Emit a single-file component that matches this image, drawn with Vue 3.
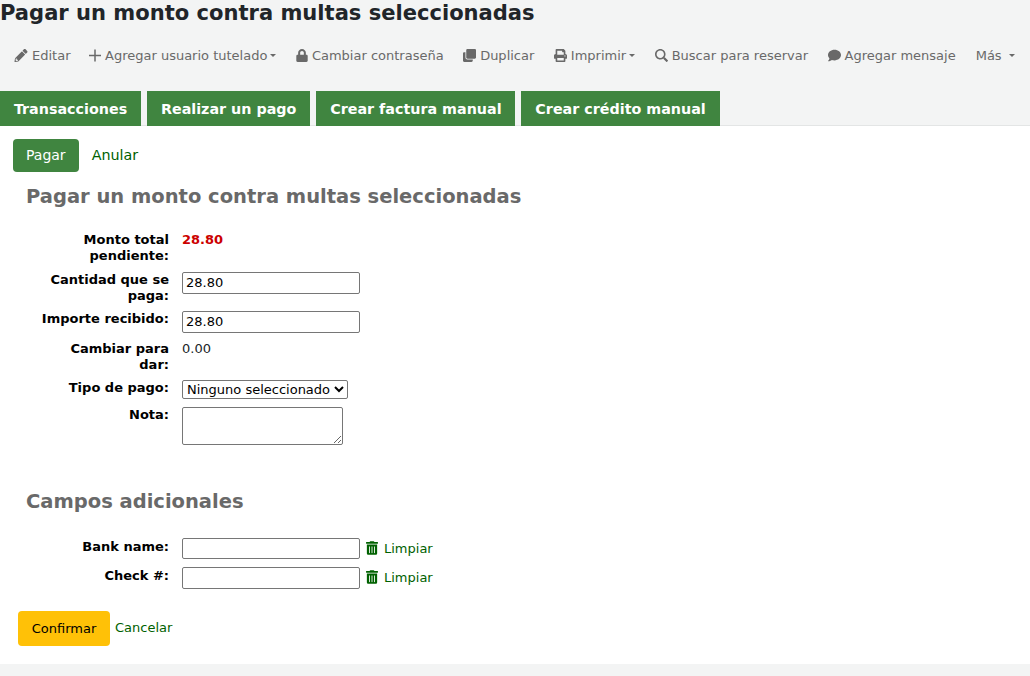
<script setup>
const tools = [
  { icon: 'pencil', label: 'Editar', w: 14 },
  { icon: 'plus', label: 'Agregar usuario tutelado', caret: true, w: 12 },
  { icon: 'lock', label: 'Cambiar contraseña', w: 12 },
  { icon: 'clone', label: 'Duplicar', w: 13 },
  { icon: 'print', label: 'Imprimir', caret: true, w: 13 },
  { icon: 'search', label: 'Buscar para reservar', w: 13 },
  { icon: 'comment', label: 'Agregar mensaje', w: 13 },
  { label: 'Más', caret: true, more: true },
]
const icons = {
  pencil: { box: '0 0 512 512', d: 'M497.9 142.1l-46.1 46.1c-4.7 4.7-12.3 4.7-17 0l-111-111c-4.7-4.7-4.7-12.3 0-17l46.1-46.1c18.7-18.7 49.1-18.7 67.9 0l60.1 60.1c18.8 18.7 18.8 49.1 0 67.9zM284.2 99.8L21.6 362.4.4 483.9c-2.9 16.4 11.4 30.6 27.8 27.8l121.5-21.3 262.6-262.6c4.7-4.7 4.7-12.3 0-17l-111-111c-4.8-4.7-12.4-4.7-17.1 0zM88 424h48v36.3l-64.5 11.3-31.1-31.1L51.7 376H88v48z' },
  plus: { box: '0 0 448 448', d: 'M196 0h56v196h196v56H252v196h-56V252H0v-56h196z' },
  lock: { box: '0 0 448 512', d: 'M400 224h-24v-72C376 68.2 307.8 0 224 0S72 68.2 72 152v72H48c-26.5 0-48 21.5-48 48v192c0 26.5 21.5 48 48 48h352c26.5 0 48-21.5 48-48V272c0-26.500-21.500-48-48-48zm-104 0H152v-72c0-39.700 32.300-72 72-72s72 32.300 72 72v72z' },
  clone: { box: '0 0 512 512', d: 'M464 0c26.510 0 48 21.490 48 48v288c0 26.510-21.490 48-48 48H176c-26.510 0-48-21.490-48-48V48c0-26.510 21.490-48 48-48h288M176 416c-44.112 0-80-35.888-80-80V128H48c-26.510 0-48 21.490-48 48v288c0 26.510 21.490 48 48 48h288c26.510 0 48-21.490 48-48v-48H176z' },
  print: { box: '0 0 512 512', d: 'M448 192V77.250c0-8.490-3.370-16.620-9.370-22.630L393.370 9.370c-6-6-14.140-9.370-22.630-9.370H96C78.330 0 64 14.330 64 32v160c-35.350 0-64 28.650-64 64v112c0 8.840 7.160 16 16 16h48v96c0 17.670 14.330 32 32 32h320c17.670 0 32-14.330 32-32v-96h48c8.840 0 16-7.160 16-16V256c0-35.350-28.650-64-64-64zm-64 256H128v-96h256v96zm0-224H128V64h192v48c0 8.840 7.160 16 16 16h48v96zm48 72c-13.250 0-24-10.750-24-24 0-13.260 10.750-24 24-24s24 10.740 24 24c0 13.250-10.750 24-24 24z' },
  search: { box: '0 0 512 512', d: 'M505 442.7L405.3 343c-4.500-4.500-10.600-7-17-7H372c27.600-35.300 44-79.700 44-128C416 93.100 322.900 0 208 0S0 93.100 0 208s93.100 208 208 208c48.300 0 92.700-16.400 128-44v16.300c0 6.400 2.500 12.500 7 17l99.700 99.700c9.400 9.400 24.600 9.400 33.900 0l28.300-28.300c9.400-9.400 9.400-24.600.1-34zM208 353c-80 0-145-65-145-145 0-80 65-145 145-145 80 0 145 65 145 145 0 80-65 145-145 145z' },
  comment: { box: '0 0 512 512', d: 'M256 32C114.600 32 0 125.100 0 240c0 49.600 21.400 95 57 130.700C44.500 421.100 2.700 466 2.200 466.500c-2.200 2.300-2.800 5.700-1.500 8.700S4.800 480 8 480c66.300 0 116-31.800 140.600-51.400 32.700 12.300 69 19.400 107.400 19.400 141.400 0 256-93.100 256-208S397.400 32 256 32z' },
}
const trash = 'M32 464a48 48 0 0 0 48 48h288a48 48 0 0 0 48-48V128H32zm272-256a16 16 0 0 1 32 0v224a16 16 0 0 1-32 0zm-96 0a16 16 0 0 1 32 0v224a16 16 0 0 1-32 0zm-96 0a16 16 0 0 1 32 0v224a16 16 0 0 1-32 0zM432 32H312l-9.400-18.700A24 24 0 0 0 281.100 0H166.800a23.720 23.720 0 0 0-21.400 13.300L136 32H16A16 16 0 0 0 0 48v32a16 16 0 0 0 16 16h416a16 16 0 0 0 16-16V48a16 16 0 0 0-16-16z'
const tabs = ['Transacciones', 'Realizar un pago', 'Crear factura manual', 'Crear crédito manual']
</script>

<template>
  <div class="page">
    <h1 class="title">Pagar un monto contra multas seleccionadas</h1>
    <div class="toolbar">
      <a v-for="t in tools" :key="t.label" class="tool" :class="{ more: t.more }">
        <svg v-if="t.icon" class="ti" :style="{ width: t.w + 'px' }" :viewBox="icons[t.icon].box"><path :d="icons[t.icon].d" /></svg>
        <span>{{ t.label }}</span>
        <i v-if="t.caret" class="caret"></i>
      </a>
    </div>
    <div class="tabs">
      <a v-for="t in tabs" :key="t" class="tab">{{ t }}</a>
    </div>
    <main class="content">
      <div class="subtabs">
        <a class="pill">Pagar</a>
        <a class="sublink">Anular</a>
      </div>
      <h2 class="h-first">Pagar un monto contra multas seleccionadas</h2>
      <div class="form">
        <div class="row r1">
          <label>Monto total pendiente:</label>
          <span class="due">28.80</span>
        </div>
        <div class="row r2">
          <label>Cantidad que se paga:</label>
          <input class="text" value="28.80" />
        </div>
        <div class="row r3">
          <label>Importe recibido:</label>
          <input class="text" value="28.80" />
        </div>
        <div class="row r4">
          <label>Cambiar para dar:</label>
          <span class="val">0.00</span>
        </div>
        <div class="row r5">
          <label>Tipo de pago:</label>
          <select class="sel"><option>Ninguno seleccionado</option></select>
        </div>
        <div class="row r6">
          <label>Nota:</label>
          <textarea class="area"></textarea>
        </div>
      </div>
      <h2 class="h-second">Campos adicionales</h2>
      <div class="form">
        <div class="row r7">
          <label>Bank name:</label>
          <input class="text" />
          <a class="clear"><svg class="trash" viewBox="0 0 448 512"><path :d="trash" /></svg>Limpiar</a>
        </div>
        <div class="row r8">
          <label>Check #:</label>
          <input class="text" />
          <a class="clear"><svg class="trash" viewBox="0 0 448 512"><path :d="trash" /></svg>Limpiar</a>
        </div>
      </div>
      <div class="actions">
        <button class="confirm" type="button">Confirmar</button>
        <a class="cancel">Cancelar</a>
      </div>
    </main>
    <div class="footer"></div>
  </div>
</template>

<style>
html, body { margin: 0; background: #f3f4f4; }
</style>

<style scoped>
.page {
  font-family: "DejaVu Sans", sans-serif;
  font-size: 13px;
  color: #000;
  background: #f3f4f4;
  height: 676px;
  overflow: hidden;
}
.title {
  margin: 0;
  font-size: 21.05px;
  line-height: 25px;
  font-weight: 700;
  color: #212529;
}
.toolbar {
  display: flex;
  align-items: center;
  height: 34px;
  margin-top: 13px;
  padding-left: 14px;
  gap: 19.5px;
}
.tool {
  display: flex;
  align-items: center;
  color: #696969;
  font-size: 13px;
  white-space: nowrap;
}
.tool:first-child { margin-right: -1px; }
.ti { height: 13px; fill: #696969; margin-right: 4px; flex: none; }
.caret {
  width: 0;
  height: 0;
  margin-left: 3px;
  border-left: 3px solid transparent;
  border-right: 3px solid transparent;
  border-top: 3px solid #696969;
}
.more { margin-left: 0.5px; }
.more .caret { margin-left: 7px; }
.tabs {
  display: flex;
  align-items: flex-start;
  gap: 6px;
  margin-top: 19px;
  height: 35px;
  box-sizing: border-box;
  border-bottom: 1px solid #e3e5e5;
}
.tab {
  display: flex;
  align-items: center;
  flex: none;
  height: 35px;
  padding: 0 13.9px;
  background: #408540;
  color: #fff;
  font-weight: 700;
  font-size: 14.3px;
  white-space: nowrap;
}
.content {
  background: #fff;
  height: 538px;
  box-sizing: border-box;
  padding-top: 13px;
}
.subtabs { display: flex; align-items: center; padding-left: 13px; }
.pill {
  display: flex;
  align-items: center;
  height: 33px;
  box-sizing: border-box;
  padding: 0 13px 1px;
  background: #408540;
  color: #fff;
  border-radius: 4px;
  font-size: 14px;
}
.sublink { margin-left: 13px; color: #006100; font-size: 14.3px; padding-bottom: 1px; }
h2 {
  margin: 0;
  padding-left: 26px;
  font-size: 19.5px;
  font-weight: 700;
  color: #696969;
  line-height: 24px;
}
.h-first { margin-top: 13px; }
.h-second { margin-top: 44px; }
.form { display: flex; flex-direction: column; }
.row { display: flex; align-items: flex-start; padding-left: 39px; }
.row label {
  width: 130px;
  flex: none;
  margin-right: 13px;
  text-align: right;
  font-weight: 700;
  font-size: 13px;
  line-height: 16px;
  color: #000;
}
.r1 { margin-top: 23px; height: 40px; }
.r1 .due { color: #c00; font-weight: 700; line-height: 16px; }
.r2 { height: 39px; }
.r3 { height: 30px; }
.r4 { height: 39px; }
.r4 .val { color: #212529; line-height: 16px; }
.r5 { height: 27px; }
.r6 { height: 39px; }
.text {
  width: 178px;
  height: 22px;
  box-sizing: border-box;
  border: 1px solid #767676;
  border-radius: 2px;
  padding: 0 3px 2px;
  font: 13px "DejaVu Sans", sans-serif;
  color: #000;
  background: #fff;
  margin: 0;
}
.sel {
  width: 166px;
  height: 19px;
  box-sizing: border-box;
  font: 13px "DejaVu Sans", sans-serif;
  color: #000;
  background: #fff;
  border: 1px solid #767676;
  border-radius: 2px;
}
.area {
  width: 161px;
  height: 38px;
  box-sizing: border-box;
  border: 1px solid #767676;
  border-radius: 2px;
  margin: 0;
  background: #fff;
}
.r7 { margin-top: 24px; height: 29px; }
.r7 .text { height: 21px; }
.r7 label, .r8 label { padding-top: 1px; }
.r8 { height: 22px; }
.clear {
  display: flex;
  align-items: center;
  color: #006100;
  font-size: 13px;
  margin-left: 6px;
  height: 20px;
}
.trash { width: 12px; height: 14px; fill: #006100; margin-right: 6px; }
.actions {
  display: flex;
  align-items: center;
  padding-left: 18px;
  margin-top: 22px;
}
.confirm {
  width: 92px;
  height: 35px;
  background: #ffc107;
  border: 0;
  border-radius: 4px;
  font: 13px "DejaVu Sans", sans-serif;
  color: #000;
  padding: 0;
}
.cancel { margin-left: 5px; color: #006100; font-size: 13px; position: relative; top: -1px; }
.footer { height: 12px; }
</style>
